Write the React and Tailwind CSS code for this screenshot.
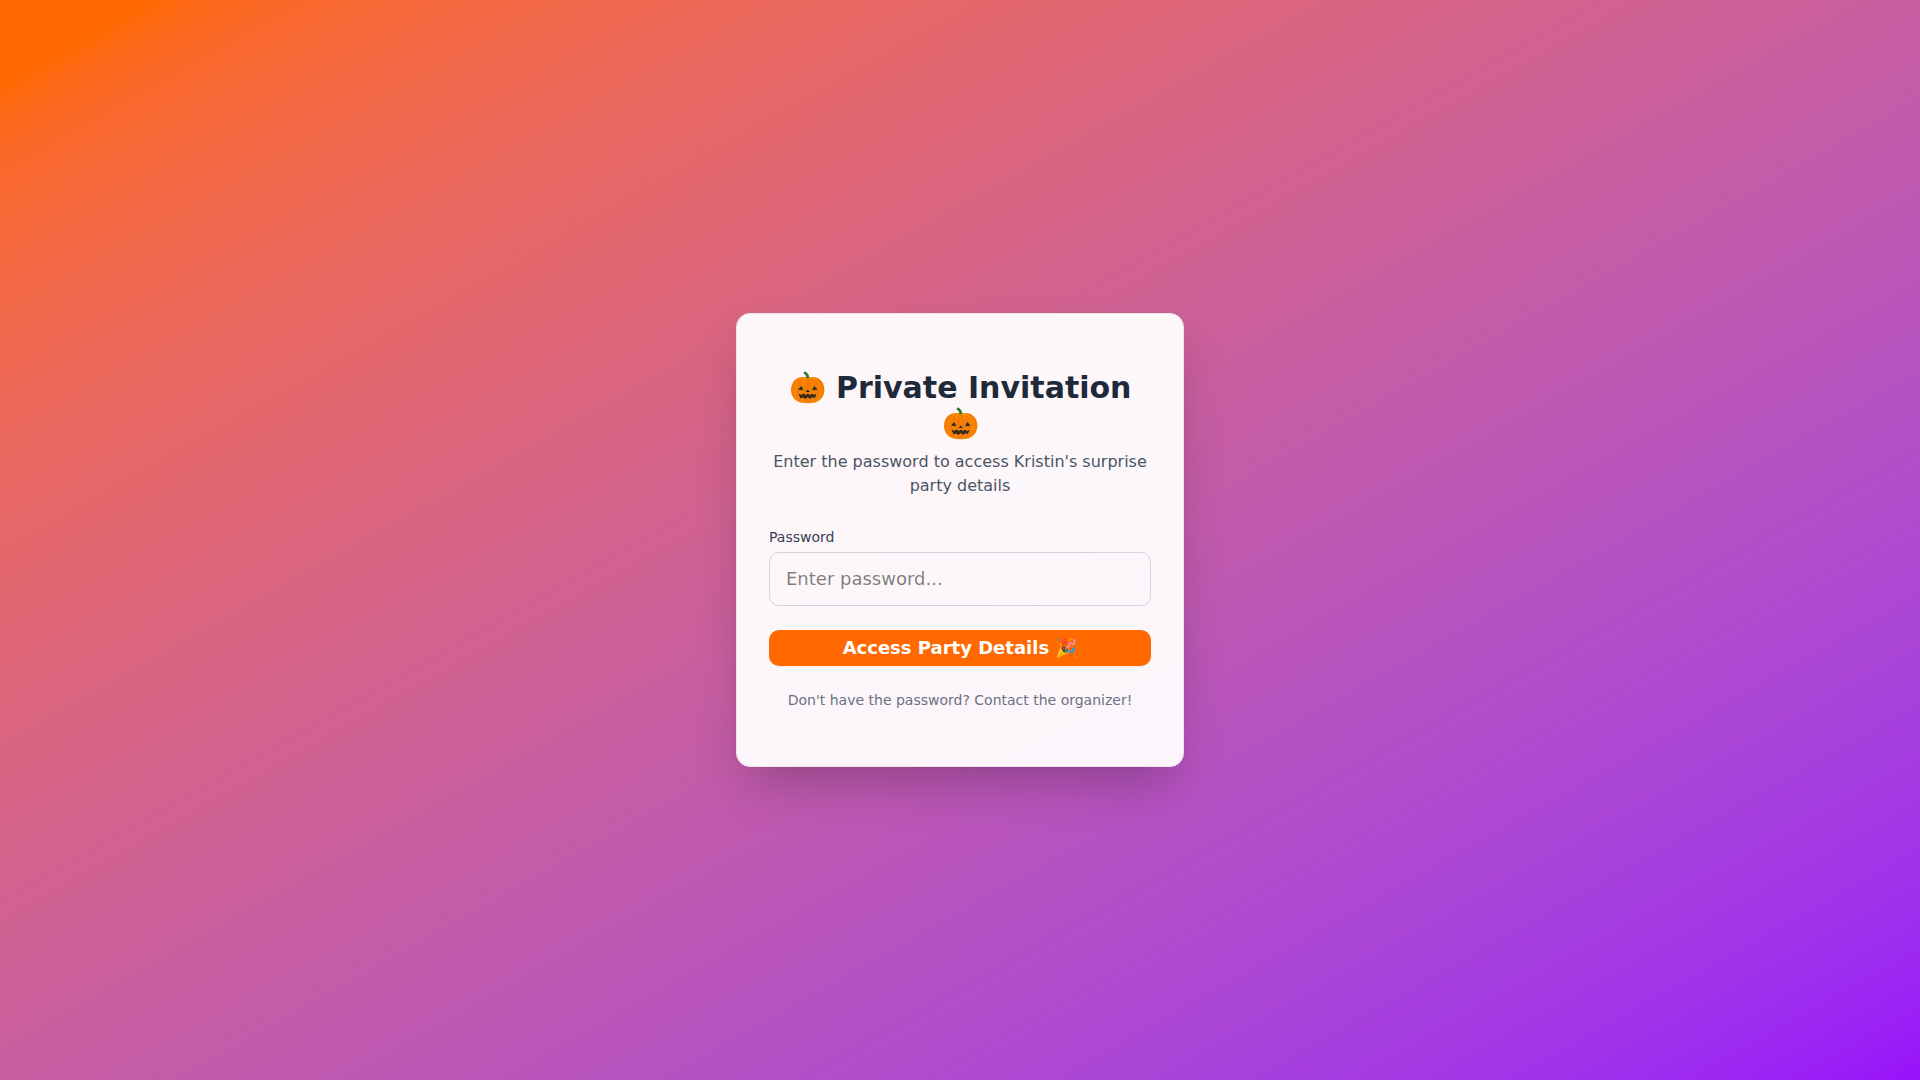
import { useState } from 'react';

export default function App() {
  const [password, setPassword] = useState('');

  const handleSubmit = (e) => {
    e.preventDefault();
  };

  return (
    <main className="min-h-screen flex items-center justify-center p-4 bg-gradient-to-br from-orange-500 to-purple-600 font-['DejaVu_Sans',sans-serif]">
      <div className="w-full max-w-md flex flex-col gap-6 rounded-[14px] border border-[#e5e5e5] bg-white/95 py-6 shadow-2xl">
        <div className="p-8">
          <header className="text-center mb-8">
            <h1 className="text-3xl font-bold text-gray-800 mb-2">🎃 Private Invitation 🎃</h1>
            <p className="text-gray-600">Enter the password to access Kristin's surprise party details</p>
          </header>

          <form onSubmit={handleSubmit} className="space-y-6">
            <div>
              <label htmlFor="password" className="block text-sm leading-none text-gray-700 mb-2">Password</label>
              <input
                id="password"
                type="password"
                value={password}
                onChange={(e) => setPassword(e.target.value)}
                placeholder="Enter password..."
                className="w-full px-4 py-3 text-lg rounded-[10px] border border-gray-300 placeholder:text-black/50 outline-none"
              />
            </div>
            <button
              type="submit"
              className="w-full h-9 flex items-center justify-center rounded-[10px] bg-orange-500 text-lg font-semibold text-white shadow-xs"
            >
              Access Party Details 🎉
            </button>
          </form>

          <p className="mt-6 text-center text-sm text-gray-500">Don't have the password? Contact the organizer!</p>
        </div>
      </div>
    </main>
  );
}
